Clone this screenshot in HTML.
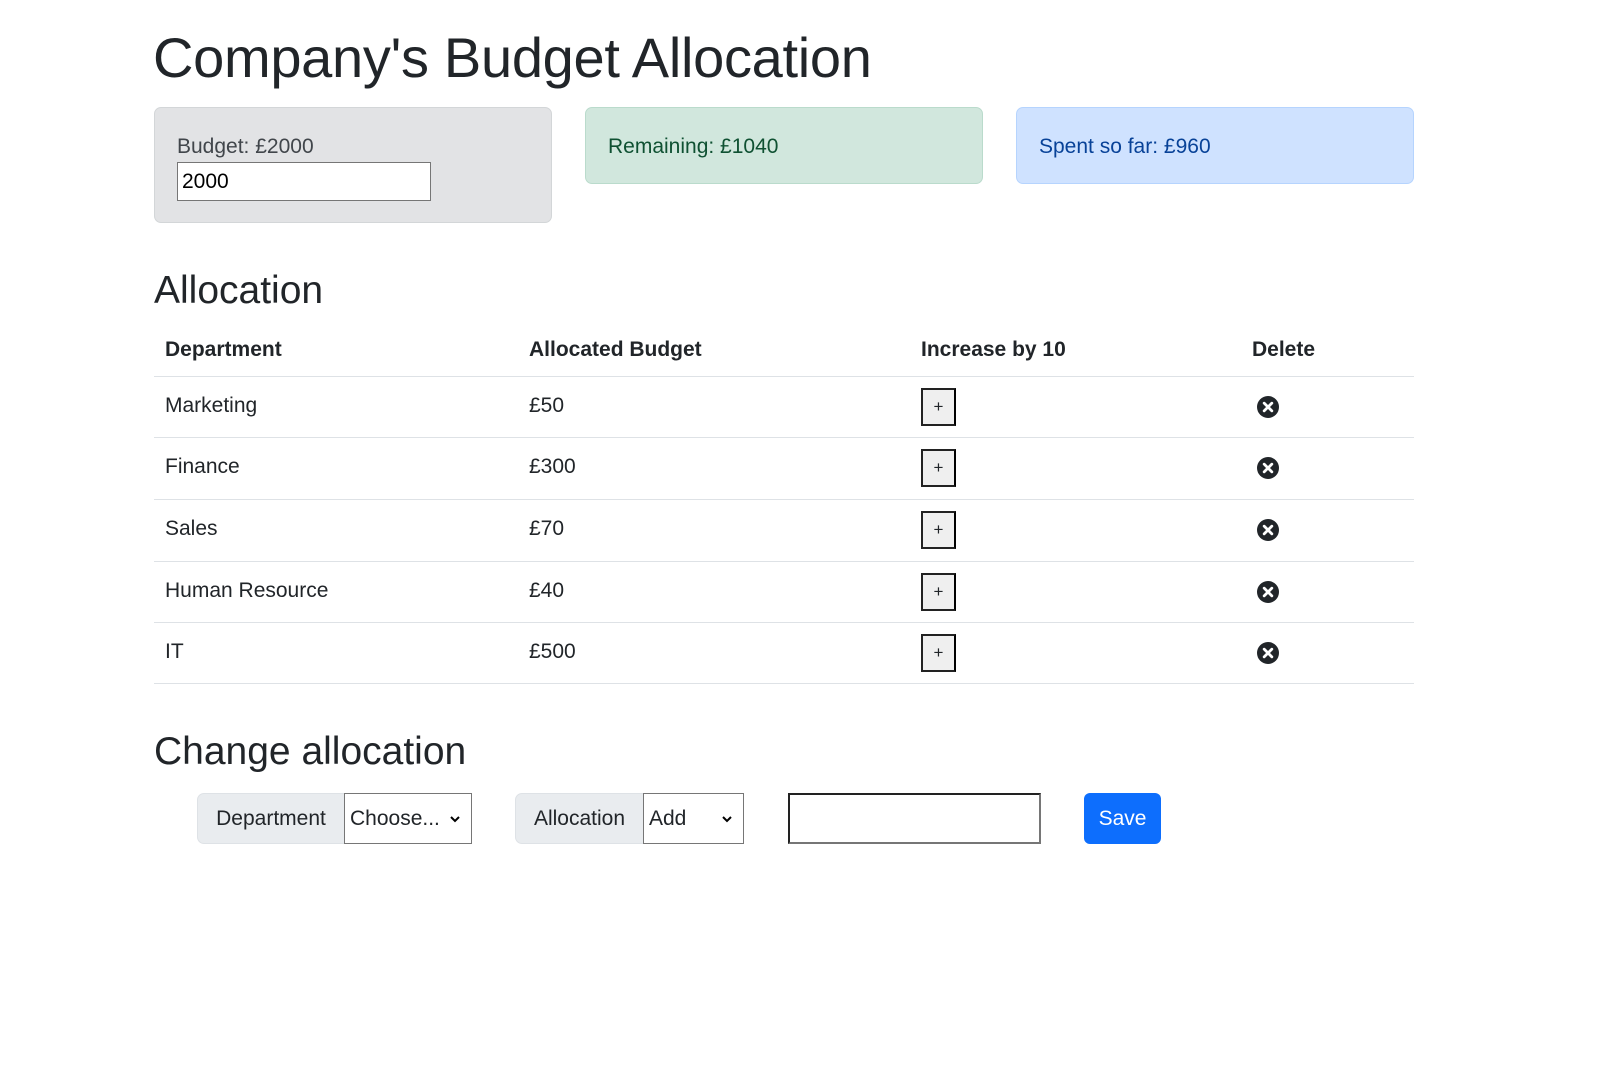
<!DOCTYPE html>
<html><head><meta charset="utf-8"><style>
*{box-sizing:border-box;margin:0;padding:0}
body{width:1601px;height:1067px;background:#fff;font-family:"Liberation Sans",sans-serif;color:#212529;position:relative;overflow:hidden}
.a{position:absolute;white-space:nowrap}
h1{position:absolute;left:153px;top:25px;font-size:56px;font-weight:500;letter-spacing:-0.3px;line-height:66px}
h3{position:absolute;left:154px;font-size:39px;font-weight:500;line-height:46px}
.box{position:absolute;border-radius:7px;border:1px solid;font-size:21px}
.th{position:absolute;top:338px;font-weight:bold;font-size:21px}
.row{position:absolute;left:154px;width:1260px;border-top:1px solid #dee2e6;height:62px;font-size:21px}
.row span{position:absolute;top:17px}
.plus{position:absolute;left:767px;top:11px;width:35px;height:38px;border:2px solid #222;background:#efefef;border-right-color:#000;font-size:17px;text-align:center;line-height:34px}
.x{position:absolute;left:1103px;top:19px;width:22px;height:22px}
.lab{position:absolute;top:793px;height:51px;background:#e9ecef;border:1px solid #dee2e6;border-radius:7px 0 0 7px;font-size:21px;line-height:49px;text-align:center}
.sel{position:absolute;top:793px;height:51px;border:1px solid #767676;background:#fff;font-size:21px;line-height:49px;padding-left:5px}
.sel svg{position:absolute;right:10px;top:20px}
</style></head><body>
<h1>Company's Budget Allocation</h1>
<div class="box" style="left:154px;top:107px;width:398px;height:116px;background:#e2e3e5;border-color:#d3d6d8;color:#41464b">
<div class="a" style="left:22px;top:27px">Budget: £2000</div>
<div class="a" style="left:22px;top:54px;width:254px;height:39px;background:#fff;border:1px solid #767676;color:#000;padding-left:4px;line-height:37px">2000</div>
</div>
<div class="box" style="left:585px;top:107px;width:398px;height:77px;background:#d1e7dd;border-color:#badbcc;color:#0f5132"><div class="a" style="left:22px;top:27px">Remaining: £1040</div></div>
<div class="box" style="left:1016px;top:107px;width:398px;height:77px;background:#cfe2ff;border-color:#b6d4fe;color:#084298"><div class="a" style="left:22px;top:27px">Spent so far: £960</div></div>

<h3 style="top:268px">Allocation</h3>
<div class="th" style="left:165px">Department</div>
<div class="th" style="left:529px">Allocated Budget</div>
<div class="th" style="left:921px">Increase by 10</div>
<div class="th" style="left:1252px">Delete</div>

<div class="row" style="top:376px"><span style="left:11px">Marketing</span><span style="left:375px">£50</span><div class="plus">+</div><svg class="x" viewBox="0 0 16 16"><circle cx="8" cy="8" r="8" fill="#212529"/><path d="M5.2 5.2l5.6 5.6M10.8 5.2l-5.6 5.6" stroke="#fff" stroke-width="2" stroke-linecap="round"/></svg></div>
<div class="row" style="top:437px"><span style="left:11px">Finance</span><span style="left:375px">£300</span><div class="plus">+</div><svg class="x" viewBox="0 0 16 16"><circle cx="8" cy="8" r="8" fill="#212529"/><path d="M5.2 5.2l5.6 5.6M10.8 5.2l-5.6 5.6" stroke="#fff" stroke-width="2" stroke-linecap="round"/></svg></div>
<div class="row" style="top:499px"><span style="left:11px">Sales</span><span style="left:375px">£70</span><div class="plus">+</div><svg class="x" viewBox="0 0 16 16"><circle cx="8" cy="8" r="8" fill="#212529"/><path d="M5.2 5.2l5.6 5.6M10.8 5.2l-5.6 5.6" stroke="#fff" stroke-width="2" stroke-linecap="round"/></svg></div>
<div class="row" style="top:561px"><span style="left:11px">Human Resource</span><span style="left:375px">£40</span><div class="plus">+</div><svg class="x" viewBox="0 0 16 16"><circle cx="8" cy="8" r="8" fill="#212529"/><path d="M5.2 5.2l5.6 5.6M10.8 5.2l-5.6 5.6" stroke="#fff" stroke-width="2" stroke-linecap="round"/></svg></div>
<div class="row" style="top:622px;border-bottom:1px solid #dee2e6"><span style="left:11px">IT</span><span style="left:375px">£500</span><div class="plus">+</div><svg class="x" viewBox="0 0 16 16"><circle cx="8" cy="8" r="8" fill="#212529"/><path d="M5.2 5.2l5.6 5.6M10.8 5.2l-5.6 5.6" stroke="#fff" stroke-width="2" stroke-linecap="round"/></svg></div>

<h3 style="top:729px">Change allocation</h3>
<div class="lab" style="left:197px;width:148px">Department</div>
<div class="sel" style="left:344px;width:128px">Choose...<svg width="12" height="10" viewBox="0 0 12 10"><path d="M2 3l4 4 4-4" stroke="#000" stroke-width="2" fill="none"/></svg></div>
<div class="lab" style="left:515px;width:129px">Allocation</div>
<div class="sel" style="left:643px;width:101px">Add<svg width="12" height="10" viewBox="0 0 12 10"><path d="M2 3l4 4 4-4" stroke="#000" stroke-width="2" fill="none"/></svg></div>
<div class="a" style="left:788px;top:793px;width:253px;height:51px;border:2px solid #222;border-bottom-color:#767676;border-right-color:#767676"></div>
<div class="a" style="left:1084px;top:793px;width:77px;height:51px;background:#0d6efd;border-radius:6px;color:#fff;font-size:21px;line-height:51px;text-align:center">Save</div>
</body></html>
